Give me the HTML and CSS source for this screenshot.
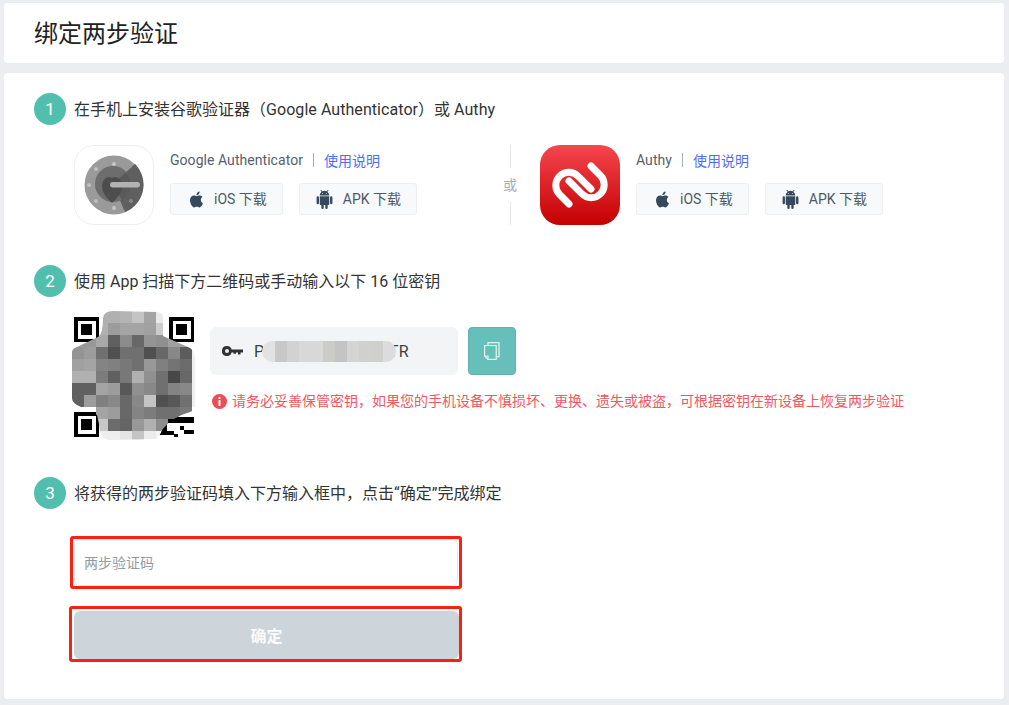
FILE: index.html
```html
<!DOCTYPE html>
<html lang="zh-CN">
<head>
    <meta charset="UTF-8">
    <title>绑定两步验证</title>
    <link rel="stylesheet" href="styles.css">
</head>
<body>
    <svg class="icon-defs" aria-hidden="true">
        <symbol id="icon-apple" viewBox="0 0 24 24">
            <path d="M18.71 19.5c-.83 1.24-1.71 2.45-3.05 2.47-1.34.03-1.77-.79-3.29-.79-1.53 0-2 .77-3.27.82-1.31.05-2.3-1.32-3.14-2.53C4.25 17 2.94 12.45 4.7 9.39c.87-1.52 2.43-2.48 4.12-2.51 1.28-.02 2.5.87 3.29.87.78 0 2.26-1.07 3.81-.91.65.03 2.47.26 3.64 1.98-.09.06-2.17 1.28-2.15 3.81.03 3.02 2.65 4.03 2.68 4.04-.03.07-.42 1.44-1.38 2.83M13 3.5c.73-.83 1.94-1.46 2.94-1.5.13 1.17-.34 2.35-1.04 3.19-.69.85-1.83 1.51-2.95 1.42-.15-1.15.41-2.35 1.05-3.11z"/>
        </symbol>
        <symbol id="icon-android" viewBox="0 0 24 24">
            <path d="M15,5H14V4H15M10,5H9V4H10M15.53,2.16L16.84,0.85C17.03,0.66 17.03,0.34 16.84,0.14C16.64,-0.05 16.32,-0.05 16.13,0.14L14.65,1.62C13.85,1.23 12.95,1 12,1C11.04,1 10.14,1.23 9.34,1.63L7.85,0.14C7.66,-0.05 7.34,-0.05 7.15,0.14C6.95,0.34 6.95,0.66 7.15,0.85L8.46,2.16C6.97,3.26 6,5 6,7H18C18,5 17,3.25 15.53,2.16M20.5,8A1.5,1.5 0 0,0 19,9.5V16.5A1.5,1.5 0 0,0 20.5,18A1.5,1.5 0 0,0 22,16.5V9.5A1.5,1.5 0 0,0 20.5,8M3.5,8A1.5,1.5 0 0,0 2,9.5V16.5A1.5,1.5 0 0,0 3.5,18A1.5,1.5 0 0,0 5,16.5V9.5A1.5,1.5 0 0,0 3.5,8M6,18A1,1 0 0,0 7,19H8V22.5A1.5,1.5 0 0,0 9.5,24A1.5,1.5 0 0,0 11,22.5V19H13V22.5A1.5,1.5 0 0,0 14.5,24A1.5,1.5 0 0,0 16,22.5V19H17A1,1 0 0,0 18,18V8H6V18Z"/>
        </symbol>
    </svg>

    <header class="panel page-header">
        <h1>绑定两步验证</h1>
    </header>

    <main class="panel steps">
        <div class="step-title">
            <span class="step-num">1</span>
            <span class="step-text">在手机上安装谷歌验证器（<span class="latin">Google Authenticator</span>）或 <span class="latin">Authy</span></span>
        </div>
        <div class="apps">
            <div class="app app-google">
                <div class="app-logo logo-google">
                    <svg width="60" height="60" viewBox="0 0 60 60">
                        <circle cx="30" cy="30" r="29.5" fill="#9a9a9a"/>
                        <path d="M29 29L51 9A29.5 29.5 0 0 1 41 57Z" fill="#5f5f5f"/>
                        <circle cx="30" cy="9" r="2" fill="#c4c4c4"/>
                        <circle cx="12" cy="14" r="2" fill="#c0c0c0"/>
                        <circle cx="5" cy="30" r="2" fill="#bdbdbd"/>
                        <circle cx="12" cy="46" r="2" fill="#bdbdbd"/>
                        <circle cx="30" cy="53" r="2" fill="#c4c4c4"/>
                        <circle cx="47" cy="46" r="2" fill="#868686"/>
                        <circle cx="29" cy="29" r="18" fill="#6d6d6d"/>
                        <path d="M29 29L42 17A18 18 0 0 1 38 45Z" fill="#5a5a5a"/>
                        <path d="M28 48C24 44 18 39 18 31C18 26 21 22 25 22C26.500 22 28 23 28 23C28 23 30 22 31 22C35 22 38 26 38 31C38 39 32 44 28 48Z" fill="#4d4d4d"/>
                        <rect x="26" y="27" width="30" height="5.500" rx="2.700" fill="#b3b3b3"/>
                    </svg>
                </div>
                <div class="app-info">
                    <div class="app-name">
                        <span>Google Authenticator</span>
                        <i class="sep"></i>
                        <a href="#">使用说明</a>
                    </div>
                    <div class="dl-btns">
                        <a class="dl-btn" href="#"><svg><use href="#icon-apple"/></svg><span>iOS 下载</span></a>
                        <a class="dl-btn" href="#"><svg><use href="#icon-android"/></svg><span>APK 下载</span></a>
                    </div>
                </div>
            </div>
            <div class="or-col">
                <i></i>
                <span>或</span>
                <i></i>
            </div>
            <div class="app">
                <div class="app-logo logo-authy">
                    <svg width="80" height="80" viewBox="0 0 80 80" fill="none" stroke="#fff" stroke-width="7" stroke-linecap="round">
                        <path d="M29 59L19.600 49.500A13 13 0 0 1 38 31.100L51 44"/>
                        <path d="M51 21L60.400 30.500A13 13 0 0 1 42 48.900L29 36"/>
                    </svg>
                </div>
                <div class="app-info">
                    <div class="app-name">
                        <span>Authy</span>
                        <i class="sep"></i>
                        <a href="#">使用说明</a>
                    </div>
                    <div class="dl-btns">
                        <a class="dl-btn" href="#"><svg><use href="#icon-apple"/></svg><span>iOS 下载</span></a>
                        <a class="dl-btn" href="#"><svg><use href="#icon-android"/></svg><span>APK 下载</span></a>
                    </div>
                </div>
            </div>
        </div>

        <div class="step-title step-next">
            <span class="step-num">2</span>
            <span class="step-text">使用 App 扫描下方二维码或手动输入以下 16 位密钥</span>
        </div>
        <div class="secret">
            <svg class="qr" width="120" height="120" viewBox="0 0 120 120" shape-rendering="crispEdges">
                <defs>
                    <clipPath id="blob">
                        <path shape-rendering="auto" d="M29 1Q30 -6 39 -6L83 -5Q89 -5 89 1L89 19L114 30Q121 33 121 41L121 88Q120 94 116 95Q98 100 88 113Q86 119 82 122L36 123Q28 122 26 115Q25 105 23 98L3 88Q-2 85 -2 81L-2 35Q-2 32 3 30L24 20Q29 17 29 1Z"/>
                    </clipPath>
                </defs>
                <path fill="#000" fill-rule="evenodd" d="M0 0h25v25H0zM3.500 3.500v18h18v-18zM7 7h11v11H7z"/>
                <path fill="#000" fill-rule="evenodd" d="M95 0h25v25H95zM98.500 3.500v18h18v-18zM102 7h11v11h-11z"/>
                <path fill="#000" fill-rule="evenodd" d="M0 95h25v25H0zM3.500 98.500v18h18v-18zM7 102h11v11H7z"/>
                <path fill="#000" d="M88 100h32v6H88zM88 106h5v10h-5zM106 109h4v4h-4zM110 113h10v4h-10zM84 114h16v4H84zM100 117h4v3h-4z"/>
                <g clip-path="url(#blob)">
                    <g transform="translate(-2 -6)">
                        <rect x="24" y="0" width="12" height="12" fill="#b0b0b0"/><rect x="36" y="0" width="12" height="12" fill="#b0b0b0"/><rect x="48" y="0" width="12" height="12" fill="#b4b4b4"/><rect x="60" y="0" width="12" height="12" fill="#c4c4c4"/><rect x="72" y="0" width="12" height="12" fill="#a4a4a4"/><rect x="84" y="0" width="12" height="12" fill="#eaeaea"/>
                        <rect x="24" y="12" width="12" height="12" fill="#b0b0b0"/><rect x="36" y="12" width="12" height="12" fill="#9c9c9c"/><rect x="48" y="12" width="12" height="12" fill="#a4a4a4"/><rect x="60" y="12" width="12" height="12" fill="#a4a4a4"/><rect x="72" y="12" width="12" height="12" fill="#a0a0a0"/><rect x="84" y="12" width="12" height="12" fill="#cccccc"/>
                        <rect x="0" y="24" width="24" height="12" fill="#999"/><rect x="24" y="24" width="12" height="12" fill="#a8a8a8"/><rect x="36" y="24" width="12" height="12" fill="#606060"/><rect x="48" y="24" width="12" height="12" fill="#8c8c8c"/><rect x="60" y="24" width="12" height="12" fill="#686868"/><rect x="72" y="24" width="12" height="12" fill="#949494"/><rect x="84" y="24" width="12" height="12" fill="#909090"/><rect x="96" y="24" width="32" height="12" fill="#a0a0a0"/>
                        <rect x="0" y="36" width="12" height="12" fill="#949494"/><rect x="12" y="36" width="12" height="12" fill="#9c9c9c"/><rect x="24" y="36" width="12" height="12" fill="#707070"/><rect x="36" y="36" width="12" height="12" fill="#505050"/><rect x="48" y="36" width="12" height="12" fill="#707070"/><rect x="60" y="36" width="12" height="12" fill="#707070"/><rect x="72" y="36" width="12" height="12" fill="#505050"/><rect x="84" y="36" width="12" height="12" fill="#686868"/><rect x="96" y="36" width="12" height="12" fill="#888888"/><rect x="108" y="36" width="12" height="12" fill="#5c5c5c"/><rect x="120" y="36" width="8" height="12" fill="#f0f0f0"/>
                        <rect x="0" y="48" width="12" height="12" fill="#a0a0a0"/><rect x="12" y="48" width="12" height="12" fill="#a4a4a4"/><rect x="24" y="48" width="12" height="12" fill="#848484"/><rect x="36" y="48" width="12" height="12" fill="#808080"/><rect x="48" y="48" width="12" height="12" fill="#787878"/><rect x="60" y="48" width="12" height="12" fill="#707070"/><rect x="72" y="48" width="12" height="12" fill="#989898"/><rect x="84" y="48" width="12" height="12" fill="#808080"/><rect x="96" y="48" width="12" height="12" fill="#747474"/><rect x="108" y="48" width="12" height="12" fill="#6c6c6c"/><rect x="120" y="48" width="8" height="12" fill="#f0f0f0"/>
                        <rect x="0" y="60" width="12" height="12" fill="#b0b0b0"/><rect x="12" y="60" width="12" height="12" fill="#b0b0b0"/><rect x="24" y="60" width="12" height="12" fill="#7c7c7c"/><rect x="36" y="60" width="12" height="12" fill="#606060"/><rect x="48" y="60" width="12" height="12" fill="#787878"/><rect x="60" y="60" width="12" height="12" fill="#b0b0b0"/><rect x="72" y="60" width="12" height="12" fill="#909090"/><rect x="84" y="60" width="12" height="12" fill="#707070"/><rect x="96" y="60" width="12" height="12" fill="#484848"/><rect x="108" y="60" width="12" height="12" fill="#686868"/><rect x="120" y="60" width="8" height="12" fill="#f0f0f0"/>
                        <rect x="0" y="72" width="12" height="12" fill="#606060"/><rect x="12" y="72" width="12" height="12" fill="#606060"/><rect x="24" y="72" width="12" height="12" fill="#a4a4a4"/><rect x="36" y="72" width="12" height="12" fill="#9c9c9c"/><rect x="48" y="72" width="12" height="12" fill="#585858"/><rect x="60" y="72" width="12" height="12" fill="#909090"/><rect x="72" y="72" width="12" height="12" fill="#888888"/><rect x="84" y="72" width="12" height="12" fill="#707070"/><rect x="96" y="72" width="12" height="12" fill="#848484"/><rect x="108" y="72" width="12" height="12" fill="#888888"/><rect x="120" y="72" width="8" height="12" fill="#f0f0f0"/>
                        <rect x="0" y="84" width="12" height="12" fill="#606060"/><rect x="12" y="84" width="12" height="12" fill="#9c9c9c"/><rect x="24" y="84" width="12" height="12" fill="#808080"/><rect x="36" y="84" width="12" height="12" fill="#888888"/><rect x="48" y="84" width="12" height="12" fill="#686868"/><rect x="60" y="84" width="12" height="12" fill="#888888"/><rect x="72" y="84" width="12" height="12" fill="#c4c4c4"/><rect x="84" y="84" width="12" height="12" fill="#505050"/><rect x="96" y="84" width="12" height="12" fill="#585858"/><rect x="108" y="84" width="12" height="12" fill="#707070"/><rect x="120" y="84" width="8" height="12" fill="#f0f0f0"/>
                        <rect x="24" y="96" width="12" height="12" fill="#a4a4a4"/><rect x="36" y="96" width="12" height="12" fill="#9c9c9c"/><rect x="48" y="96" width="12" height="12" fill="#686868"/><rect x="60" y="96" width="12" height="12" fill="#848484"/><rect x="72" y="96" width="12" height="12" fill="#7c7c7c"/><rect x="84" y="96" width="12" height="12" fill="#707070"/><rect x="96" y="96" width="12" height="12" fill="#707070"/><rect x="108" y="96" width="12" height="12" fill="#787878"/>
                        <rect x="24" y="108" width="12" height="12" fill="#c8c8c8"/><rect x="36" y="108" width="12" height="12" fill="#6c6c6c"/><rect x="48" y="108" width="12" height="12" fill="#646464"/><rect x="60" y="108" width="12" height="12" fill="#989898"/><rect x="72" y="108" width="12" height="12" fill="#b0b0b0"/><rect x="84" y="108" width="12" height="12" fill="#8c8c8c"/>
                        <rect x="24" y="120" width="24" height="12" fill="#eeeeee"/><rect x="48" y="120" width="12" height="12" fill="#e4e4e4"/><rect x="60" y="120" width="12" height="12" fill="#c4c4c4"/><rect x="72" y="120" width="12" height="12" fill="#ececec"/><rect x="84" y="120" width="12" height="12" fill="#f4f4f4"/>
                    </g>
                </g>
            </svg>
            <div class="secret-side">
                <div class="key-row">
                    <div class="key-box">
                        <svg class="key-icon" width="21" height="10" viewBox="0 0 21 10">
                            <path fill="#333" fill-rule="evenodd" d="M5 0a5 5 0 0 1 4.700 3.400H21v3h-2.500v2H16v-2h-2v1.400h-2.500V6.400H9.700A5 5 0 1 1 5 0zM5 3a2 2 0 1 0 0 4 2 2 0 0 0 0-4z"/>
                        </svg>
                        <span class="key-text">P<span class="key-mask"></span>TR</span>
                    </div>
                    <button class="copy-btn" type="button" aria-label="复制">
                        <svg width="16" height="18" viewBox="0 0 16 18" fill="none" stroke="#e6f5f3" stroke-width="1.200">
                            <path d="M4 3V.6h11v14h-2.800"/>
                            <path d="M.6 3.500h11.600v13.900H4L.6 14z"/>
                            <path d="M4 17.400V14H.6"/>
                        </svg>
                    </button>
                </div>
                <p class="warning">
                    <svg width="15" height="15" viewBox="0 0 15 15">
                        <circle cx="7.500" cy="7.500" r="7.500" fill="#ec4c55"/>
                        <rect x="6.500" y="3" width="2" height="2" fill="#fff"/>
                        <rect x="6.500" y="6" width="2" height="6" fill="#fff"/>
                    </svg>
                    <span>请务必妥善保管密钥，如果您的手机设备不慎损坏、更换、遗失或被盗，可根据密钥在新设备上恢复两步验证</span>
                </p>
            </div>
        </div>

        <div class="step-title step-next">
            <span class="step-num">3</span>
            <span class="step-text">将获得的两步验证码填入下方输入框中，点击“确定”完成绑定</span>
        </div>
        <form class="bind-form">
            <div class="mark mark-input">
                <input type="text" placeholder="两步验证码">
            </div>
            <div class="mark mark-submit">
                <button type="button" disabled>确定</button>
            </div>
        </form>
    </main>
</body>
</html>
```

FILE: styles.css
```css
* {
    box-sizing: border-box;
}
body {
    margin: 0;
    padding: 3px 5px 6px 4px;
    background-color: #ebedf1;
    font-family: Roboto, "Noto Sans CJK SC", sans-serif;
    color: #333;
}
a {
    text-decoration: none;
}
.icon-defs {
    display: none;
}
.panel {
    background: #fff;
    border-radius: 4px;
}
.page-header {
    height: 60px;
    padding: 4px 0 0 30px;
    display: flex;
    align-items: center;
}
.page-header h1 {
    margin: 0;
    font-size: 24px;
    font-weight: 400;
    line-height: 1.4;
    color: #222;
}
.steps {
    margin-top: 10px;
    height: 626px;
    padding: 20px 30px 0;
}
.step-title {
    display: flex;
    align-items: center;
    gap: 8px;
    height: 32px;
    font-size: 16px;
}
.step-text {
    padding-bottom: 2px;
}
.latin {
    letter-spacing: .06px;
}
.step-next {
    margin-top: 40px;
}
.step-num {
    width: 32px;
    height: 32px;
    border-radius: 50%;
    background-color: #52bfae;
    color: #fff;
    font-size: 17px;
    line-height: 32px;
    text-align: center;
}
.apps {
    display: flex;
    margin: 20px 0 0 40px;
}
.app {
    display: flex;
    gap: 16px;
}
.app-google {
    width: 420px;
}
.app-logo {
    width: 80px;
    height: 80px;
    border-radius: 20px;
    display: flex;
    align-items: center;
    justify-content: center;
    flex-shrink: 0;
}
.logo-google {
    border: 1px solid #eeeff1;
}
.logo-authy {
    background: linear-gradient(#f6464f, #c30000);
}
.app-info {
    padding-top: 4px;
}
.app-name {
    display: flex;
    align-items: center;
    height: 22px;
    font-size: 14px;
    color: #56606d;
}
.app-name span {
    letter-spacing: .05px;
}
.app-name a {
    color: #4f6ef7;
}
.sep {
    width: 1px;
    height: 14px;
    margin: 0 10px;
    background-color: #a9b1ba;
}
.dl-btns {
    display: flex;
    gap: 16px;
    margin-top: 12px;
}
.dl-btn {
    display: flex;
    align-items: center;
    height: 32px;
    padding: 0 15px 0 15.500px;
    background-color: #f8f9fa;
    border: 1px solid #eceef0;
    border-radius: 3px;
    font-size: 14px;
    color: #4e5966;
}
.dl-btn span {
    padding-bottom: 2px;
}
.dl-btn svg {
    width: 19px;
    height: 19px;
    margin-right: 8.500px;
    fill: #34495e;
}
.or-col {
    width: 32px;
    margin-right: 14px;
    display: flex;
    flex-direction: column;
    align-items: center;
    font-size: 14px;
    color: #a5acb4;
}
.or-col i {
    flex: 1;
    width: 1px;
    background-color: #e6e8eb;
}
.or-col span {
    margin: 7px 0;
    line-height: 20px;
}
.secret {
    display: flex;
    gap: 16px;
    margin: 20px 0 0 40px;
}
.qr {
    overflow: visible;
    flex-shrink: 0;
}
.secret-side {
    padding-top: 10px;
}
.key-row {
    display: flex;
    gap: 10px;
}
.key-box {
    width: 248px;
    height: 48px;
    padding-left: 12px;
    display: flex;
    align-items: center;
    gap: 11px;
    background-color: #f3f4f6;
    border-radius: 6px;
}
.key-text {
    display: flex;
    align-items: center;
    font-size: 16px;
    color: #38414c;
}
.key-mask {
    position: relative;
    z-index: 1;
    width: 134px;
    height: 21px;
    margin: 0 -7px 0 -2px;
    border-radius: 10px;
    background: linear-gradient(90deg,
        #e2e2e2 0 13px, #c8c8c8 13px 25px, #d2d2d2 25px 37px, #d8d8d8 37px 61px,
        #cbcbc8 61px 73px, #c4c4c4 73px 85px, #d4d4d4 85px 97px, #d0d0ce 97px 109px,
        #cfcfcc 109px 121px, #dcdcdf 121px);
}
.copy-btn {
    width: 48px;
    height: 48px;
    padding: 0;
    display: flex;
    align-items: center;
    justify-content: center;
    background-color: #66bfb9;
    border: 1px solid #5db3ad;
    border-radius: 4px;
}
.warning {
    display: flex;
    align-items: center;
    gap: 5px;
    margin: 16px 0 0 2px;
    font-size: 14px;
    line-height: 20px;
    color: #f0575f;
}
.bind-form {
    margin: 27px 0 0 40px;
}
.mark {
    border: 3px solid #fb2014;
    border-radius: 3px;
}
.mark-input {
    width: 392px;
    margin-left: -4px;
    padding: 0 1px;
}
.mark-input input {
    display: block;
    width: 100%;
    height: 47px;
    padding: 0 9px;
    border: 1px solid #e8eaed;
    border-radius: 6px;
    outline: none;
    font: 14px Roboto, "Noto Sans CJK SC", sans-serif;
}
.mark-input input::placeholder {
    color: #959ba3;
}
.mark-submit {
    width: 393px;
    margin: 17px 0 0 -5px;
    padding: 2px 0 0 2px;
}
.mark-submit button {
    display: block;
    width: 100%;
    height: 48px;
    border: none;
    border-radius: 6px;
    background-color: #cdd4da;
    color: #fafbfc;
    font: 700 16px Roboto, "Noto Sans CJK SC", sans-serif;
}
```
